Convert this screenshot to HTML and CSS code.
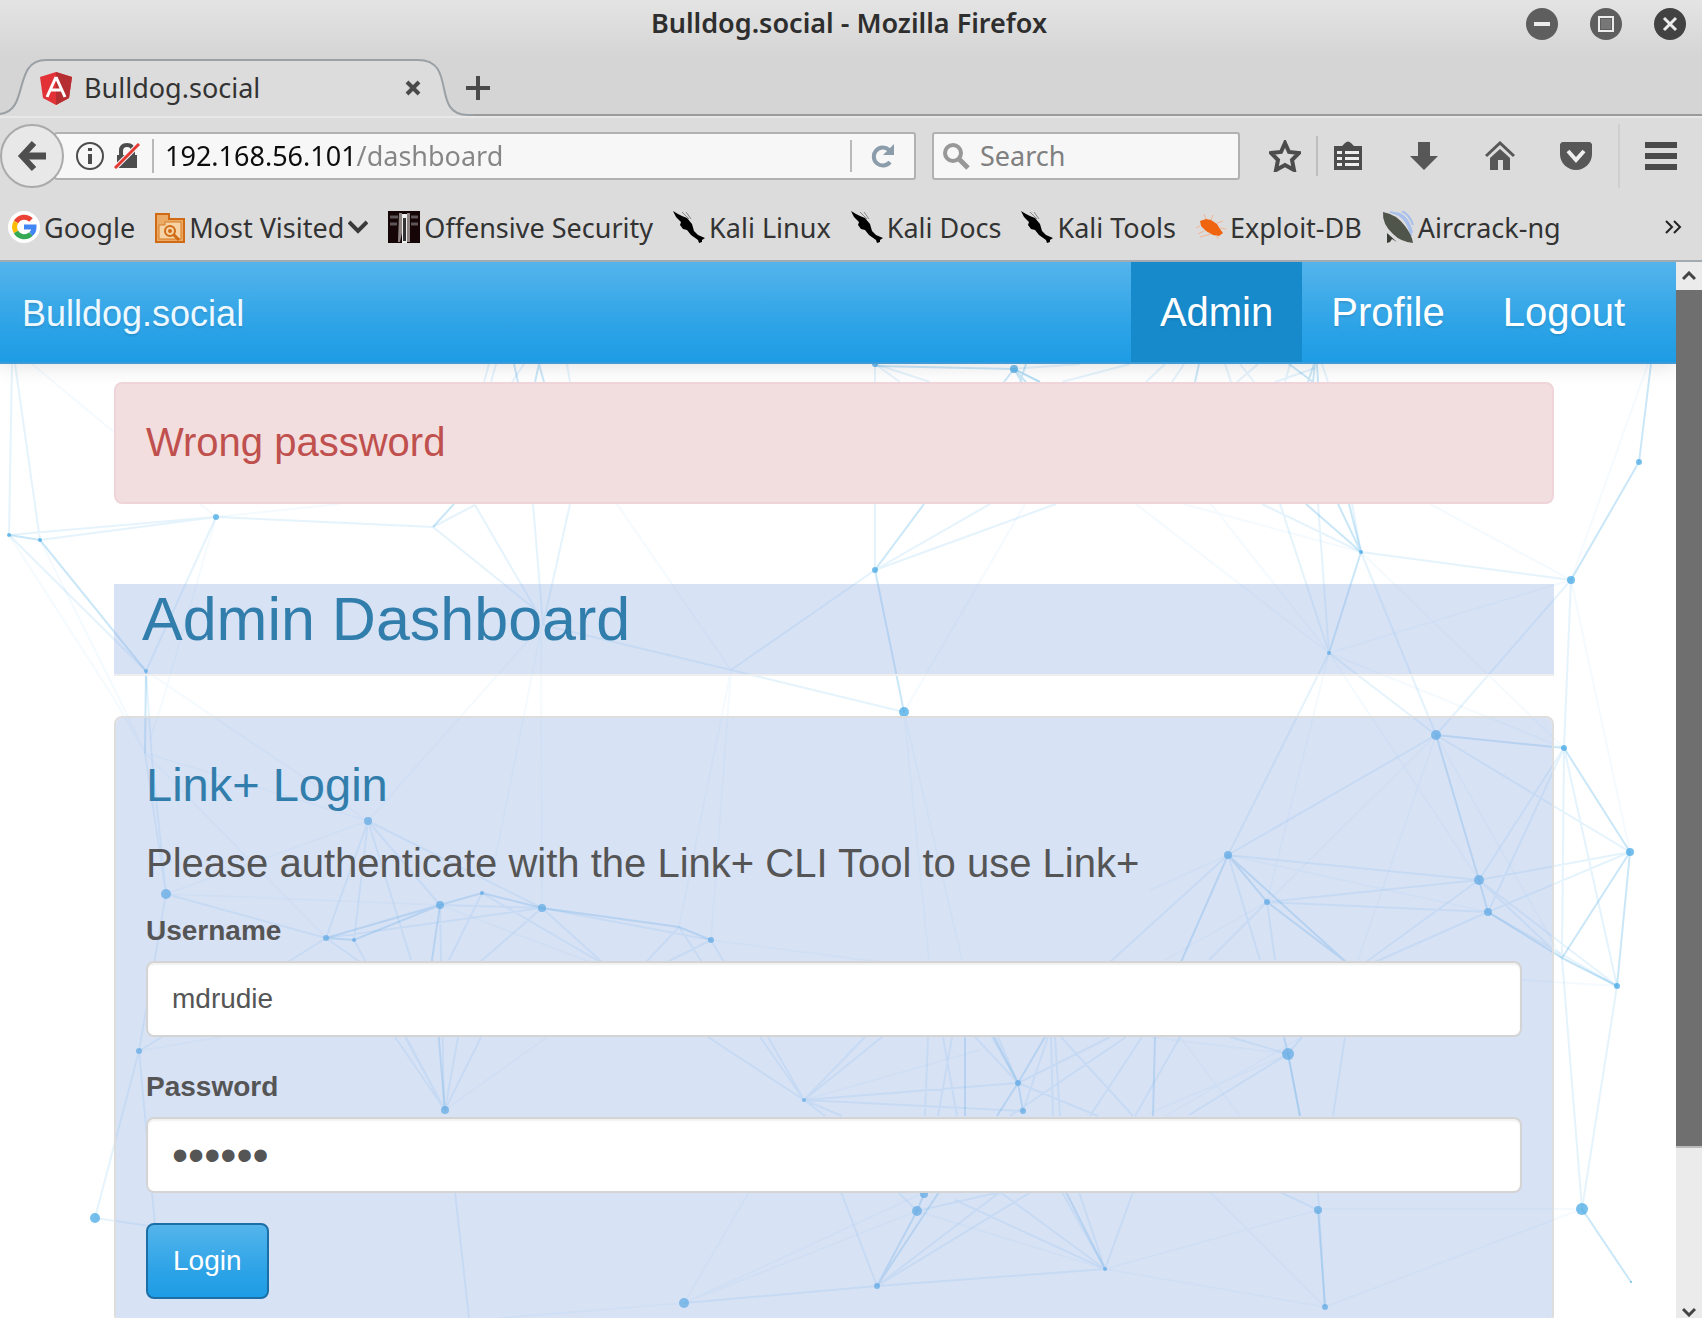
FILE: index.html
```html
<!DOCTYPE html>
<html lang="en">
<head>
<meta charset="utf-8">
<title>Bulldog.social - Mozilla Firefox</title>
<link rel="stylesheet" href="styles.css">
</head>
<body>
<svg class="defs" aria-hidden="true">
  <symbol id="dragon" viewBox="0 0 32 32">
    <path d="M0 0l5 3 4 2 5 2 5 6 2 7 4 4 7 3-3 2 0 2-3 1-1-3-7-5-4-5-4-1-3-4 1-3-5-5z"/>
    <path d="M9 1l7 7M13 1l5 7" stroke="#888" fill="none"/>
  </symbol>
</svg>
<div class="window">
  <header class="chrome-top">
    <div class="titlebar">
      <span class="title">Bulldog.social - Mozilla Firefox</span>
      <div class="controls">
        <button aria-label="Minimize"><svg width="32" height="32"><circle cx="16" cy="16" r="16" fill="#5e5e5e"/><path d="M8 16h16" stroke="#ececec" stroke-width="4"/></svg></button>
        <button aria-label="Maximize"><svg width="32" height="32"><circle cx="16" cy="16" r="16" fill="#5e5e5e"/><path d="M9 9h14v14H9z" fill="none" stroke="#ececec" stroke-width="2"/><path d="M11 11h10v10H11z" fill="#777"/></svg></button>
        <button aria-label="Close window"><svg width="32" height="32"><circle cx="16" cy="16" r="16" fill="#424242"/><path d="M10 10l12 12M22 10L10 22" stroke="#ececec" stroke-width="3"/></svg></button>
      </div>
    </div>
    <div class="tabstrip">
      <div class="tab">
        <svg class="tab-shape" width="474" height="60" viewBox="0 0 474 60">
          <path d="M0 60V58C30 56 12 4 46 4H418C458 4 430 59 468 59H474V60z" fill="#dcdcdc"/>
          <path d="M0 58C30 55 12 4 46 4H418C458 4 430 59 468 59H474" fill="none" stroke="#9aa1a6" stroke-width="2"/>
        </svg>
        <svg class="tab-icon" width="32" height="33" viewBox="0 0 32 33"><path d="M16 0l16 5-3 21-13 7L3 26 0 5z" fill="#e23237"/><path d="M16 0l16 5-3 21-13 7z" fill="#b52e31"/><path d="M16 5L7 25M16 5l9 20M11 18h10" stroke="#fff" stroke-width="3" fill="none"/></svg>
        <span class="tab-label">Bulldog.social</span>
        <button aria-label="Close tab"><svg width="18" height="18"><path d="M3 3l12 12M15 3L3 15" stroke="#4a4a4a" stroke-width="4"/></svg></button>
      </div>
      <button class="new-tab" aria-label="New tab"><svg width="24" height="24"><path d="M12 0v24M0 12h24" stroke="#4a4a4a" stroke-width="4"/></svg></button>
    </div>
  </header>
  <div class="toolbar">
    <button class="back" aria-label="Back"><svg width="30" height="32" viewBox="0 0 30 32"><path d="M17 3L5 16l12 13" fill="none" stroke="#4e4e4e" stroke-width="6"/><path d="M5 16h24" stroke="#4e4e4e" stroke-width="7"/></svg></button>
    <div class="urlbar">
      <svg width="28" height="28" viewBox="0 0 28 28"><circle cx="14" cy="14" r="13" fill="none" stroke="#4c4c4c" stroke-width="2"/><path d="M12 6h4v3h-4zM12 12h4v10h-4z" fill="#4c4c4c"/></svg>
      <svg class="lock" width="26" height="26" viewBox="0 0 26 26"><path d="M3 12h20v13H3z" fill="#4c4c4c"/><path d="M7 13V8q0-6 6-6t6 6v5" fill="none" stroke="#4c4c4c" stroke-width="4"/><path d="M1 25L25 1" stroke="#f7f7f7" stroke-width="5"/><path d="M1 25L25 1" stroke="#e43a32" stroke-width="3"/></svg>
      <input class="url" type="text" value="192.168.56.101/dashboard" aria-label="Address">
      <button class="reload" aria-label="Reload"><svg width="24" height="24" viewBox="0 0 24 24"><path d="M19 18A9 9 0 1 1 18 6" fill="none" stroke="#8b9cab" stroke-width="4"/><path d="M23 0v11H12z" fill="#8b9cab"/></svg></button>
    </div>
    <label class="searchbar">
      <svg width="28" height="28" viewBox="0 0 28 28"><circle cx="11" cy="11" r="8" fill="none" stroke="#989898" stroke-width="4"/><path d="M17 17l9 9" stroke="#989898" stroke-width="5"/></svg>
      <input type="search" placeholder="Search" aria-label="Search">
    </label>
    <div class="tools">
      <button class="star" aria-label="Bookmark this page"><svg width="32" height="32" viewBox="0 0 32 32"><path d="M16 3l4 9 10 1-7 7 2 10-9-5-9 5 2-10-7-7 10-1z" fill="none" stroke="#4c4c4c" stroke-width="4"/></svg></button>
      <button class="clip" aria-label="Show bookmarks"><svg width="30" height="32" viewBox="0 0 30 32"><path d="M1 6h8l3-3q3-3 6 0l3 3h8v24H1z" fill="#4c4c4c"/><path d="M4 11h5v3H4zM12 11h14v3H12zM4 17h5v3H4zM12 17h14v3H12zM4 23h5v3H4zM12 23h14v3H12z" fill="#eee"/></svg></button>
      <button aria-label="Downloads"><svg width="28" height="30" viewBox="0 0 28 30"><path d="M8 1h12v14h8L14 29 0 15h8z" fill="#575757"/></svg></button>
      <button aria-label="Home"><svg width="30" height="30" viewBox="0 0 30 30"><path d="M1 15L15 2l14 13" fill="none" stroke="#575757" stroke-width="3"/><path d="M5 17L15 8l10 9v12h-7V19h-5v10H5z" fill="#575757"/></svg></button>
      <button aria-label="Pocket"><svg width="32" height="30" viewBox="0 0 32 30"><path d="M2 1h28l2 2v10a16 16 0 0 1-32 0V3z" fill="#575757"/><path d="M8 10l8 9 8-9" fill="none" stroke="#eee" stroke-width="4"/></svg></button>
      <button class="menu" aria-label="Menu"><svg width="32" height="28"><path d="M0 3h32M0 14h32M0 25h32" stroke="#4a4a4a" stroke-width="6"/></svg></button>
    </div>
  </div>
  <nav class="bookmarks" aria-label="Bookmarks">
    <a href="#"><svg width="32" height="32" viewBox="0 0 32 32"><circle cx="16" cy="16" r="16" fill="#fff"/><g fill="none" stroke-width="5"><path d="M8 11a9.500 9.500 0 0 1 15-2" stroke="#ea4335"/><path d="M8 21a10 10 0 0 1 0-10" stroke="#fbbc05"/><path d="M23 23a9.500 9.500 0 0 1-15-2" stroke="#34a853"/><path d="M16 16h10q0 5-3 7" stroke="#4285f4"/></g></svg>Google</a>
    <a href="#"><svg width="30" height="32" viewBox="0 0 30 32"><path d="M1 3h13v5h15v23H1z" fill="#e9ab66" stroke="#d06a14" stroke-width="2"/><path d="M4 14h6v-3h16v17H4z" fill="#f5d3a4" stroke="#d97a22"/><circle cx="15" cy="20" r="5" fill="none" stroke="#d06a14" stroke-width="2"/><circle cx="15" cy="20" r="2" fill="#d06a14"/><path d="M18 23l6 6" stroke="#d06a14" stroke-width="3"/></svg>Most Visited<svg class="caret" width="20" height="14"><path d="M1 2l9 9 9-9" fill="none" stroke="#3a3a3a" stroke-width="4"/></svg></a>
    <a href="#"><svg width="32" height="32" viewBox="0 0 32 32"><path d="M0 0h32v32H0z" fill="#160506"/><path d="M2 6h8M2 13h7M23 6h7M23 13h7" stroke="#5d5558" stroke-width="3"/><path d="M11 2h3v20l-2 9h-2zM19 2h3v29h-3z" fill="#8f8583"/><path d="M14 3h5v29h-5z" fill="#eee"/><path d="M15 7h3v23h-3z" fill="#333"/></svg>Offensive Security</a>
    <a href="#"><svg width="32" height="32"><use href="#dragon"/></svg>Kali Linux</a>
    <a href="#"><svg width="32" height="32"><use href="#dragon"/></svg>Kali Docs</a>
    <a href="#"><svg width="32" height="32"><use href="#dragon"/></svg>Kali Tools</a>
    <a href="#"><svg width="30" height="32" viewBox="0 0 30 32"><path d="M4 10l6-2 5 1 6 4 3 5 3 4-4 3-6-1-7-4-5-5z" fill="#f0640f"/><path d="M10 8L8 3M15 9l2-5M21 12l6-2M4 15l-4 2M8 20l-6 3M15 23l-11 3M20 24l2 4M24 17l6 1" stroke="#f2b593" stroke-width="1"/></svg>Exploit-DB</a>
    <a href="#"><svg width="32" height="32" viewBox="0 0 32 32"><path d="M14 2q12 2 16 20M20 0q8 4 11 14M8 1q18 3 21 24" stroke="#a9c0ec" stroke-width="2" fill="none"/><path d="M5 22v10l3-1 2-3 5 3z" fill="#3a3d36"/><path d="M1 1q13 2 22 14 7 9 8 17-12-1-20-9Q0 13 1 1z" fill="#50554c"/></svg>Aircrack-ng</a>
    <button class="more" aria-label="More bookmarks"><svg width="18" height="14"><path d="M2 1l6 6-6 6M10 1l6 6-6 6" fill="none" stroke="#222" stroke-width="2"/></svg></button>
  </nav>

  <div class="viewport">
    <div class="page">
      <svg class="particles" viewBox="0 262 1676 1056" preserveAspectRatio="xMinYMin slice" aria-hidden="true">
        <g fill="none" stroke="#2a9fe4" stroke-width="2">
          <path opacity=".05" d="M32 364L216 517M216 517L340 504M9 535L115 700 145 753M40 540L120 700 145 753M216 517L163 700 150 740M146 671L368 821M542 625L368 821M542 625L495 860M541 625L542 908M145 753L368 821M145 753L326 938M166 894L368 821M166 894L440 905M617 504L731 670M731 670L679 927M731 670L711 940M904 712L1025 504M904 712L929 960M904 712L962 960M1361 552L1183 504M1361 552L1564 748M1329 653L1136 504M1329 653L1211 504M1329 653L1571 580M1329 653L1267 902M1329 653L1479 880M1571 580L1630 852M1329 653L1564 748M1436 735L1267 902M1436 735L1358 960M1436 735L1562 958M1228 855L1488 912M1228 855L1150 890M1562 958L1617 986 1522 980M1582 1209H1318M1582 1209L1325 1307M684 1303L749 1192M684 1303L925 1192M684 1303L917 1211M684 1303L500 1318M917 1211L1105 1269M1105 1269L1318 1210M1105 1269L1325 1307M1288 1054L1150 1037M1288 1054L1150 1113M1180 1037L1240 1116M804 1100L980 1050M1210 1192L1325 1307M445 1110L547 1037M139 1051L220 1037M1648 364L1571 580M711 940L880 962M440 905L590 962M1571 580L1430 504M1165 1116L1302 1037M1267 902L1165 960"/>
          <path opacity=".12" d="M12 364L9 535 216 517M15 364L40 540M40 540L216 517 433 527 475 505M9 535L146 671 216 517M475 505L536 610M433 527L536 610M533 504L543 625 570 504M543 625L731 670 904 712M731 670L875 570 990 504M875 364V570M875 570L1056 504M146 671L152 760 166 894M145 753L166 894 139 1051 95 1218M166 894L326 938M368 821L326 938M368 821L354 940M368 821L440 905M368 821L542 908M368 821L411 960M440 905L542 908 711 940M326 938L542 908M482 893L449 960M482 893L600 962M542 908L480 962M542 908L602 962M354 940L445 1110M326 938L360 962M326 938L288 962M679 927L646 962M711 940L667 962M679 927L702 962M711 940L724 962M440 905L444 1110M395 1037L445 1110 405 1037M445 1110L458 1037M445 1110L481 1037M139 1051L155 1225M95 1218L150 1226M455 1192L469 1318M139 1051L162 1037M1361 552L1571 580 1436 735 1361 552M1361 552L1262 504M1361 552L1352 504M1329 653L1318 504M1329 653L1280 504M1329 653L1228 855M1329 653L1436 735M1571 580L1564 748 1562 958 1582 1209 1617 986M1436 735L1228 855 1479 880 1630 852 1488 912 1267 902 1479 880M1436 735L1630 852M1564 748L1617 986M1564 748L1479 880 1562 958M1564 748L1488 912M1228 855L1260 960M1228 855L1110 962M1267 902L1209 960M1267 902L1275 960M1479 880L1366 962M1488 912L1375 962M1479 880L1617 986 1488 912M708 1037L804 1100 760 1037M768 1037L804 1100 865 1037M882 1037L804 1100 1018 1083M804 1100L1023 1111M804 1100L842 1116M804 1100L825 1116M928 1037L925 1116M952 1037L938 1116M943 1037L957 1116M1051 1037L1053 1116M1055 1037L1060 1116M1061 1037L1133 1116M1142 1037L1090 1116M1126 1037L1010 1116M1018 1083L1098 1116M1018 1083L992 1037M1018 1083L998 1037M1018 1083L975 1037M1023 1111L1048 1037M1018 1083L1110 1037M1180 1037L1135 1116M1288 1054L1230 1037M1288 1054L1302 1037M1288 1054L1189 1115M1288 1054L1300 1116M1345 1037L1333 1116M1318 1210L1280 1192M1318 1192L1325 1307M917 1211L1000 1192M917 1211L898 1192M877 1286L841 1192M877 1286L1000 1192M877 1286L1031 1192M684 1303L877 1286 1105 1269 955 1200M1105 1269L1000 1192M1105 1269L1062 1192M1105 1269L1079 1192M1105 1269L1133 1192M875 364L930 382M875 364L900 382M1014 369L1040 382M1014 369L1080 364M1062 382L1130 364M1146 382L1165 364M1172 382L1184 364M1225 364L1231 382M1240 364L1254 382M1258 364L1237 382M1275 382L1315 368M1285 382L1290 364M1322 364L1328 382M484 382L489 364M491 382L496 364M512 382L524 364M567 364L570 382"/>
          <path opacity=".25" d="M9 535L40 540 146 671 145 753M454 504L433 527M326 938L354 940 440 905 482 893 542 908 679 927 711 940M326 938L440 905 432 960 445 1110M1651 364L1639 462 1571 580M1361 552L1329 653M1361 552L1338 504M1361 552L1306 504M1361 552L1349 504M875 570L904 712M875 570L924 504M1436 735L1479 880 1488 912 1562 958 1617 986 1630 852 1564 748 1436 735M1630 852L1562 958M1228 855L1267 902 1346 962 1228 855 1181 962M1018 1083L997 1116M1018 1083L1023 1111M1045 1037L1018 1083 994 1037M965 1037V1116M1155 1037L1153 1116M1288 1054L1284 1037M1288 1054L1300 1116M1318 1210L1325 1307M1582 1209L1631 1282M924 1194L917 1211 877 1286 939 1192M1105 1269L1066 1192M514 364L518 382M535 382L539 364 544 382M875 366L1014 369 1022 382M1014 369L1004 382M1014 369L1026 382M1014 369L1040 382M1026 364L1020 382M1195 382L1199 364M1289 364L1313 382 1315 364M1308 382L1314 364M1317 364L1318 382"/>
        </g>
        <g fill="#3ea5e4" opacity=".7">
          <circle cx="9" cy="535" r="2"/><circle cx="40" cy="540" r="2"/><circle cx="216" cy="517" r="3"/><circle cx="146" cy="671" r="2"/><circle cx="166" cy="894" r="5"/><circle cx="368" cy="821" r="4"/><circle cx="326" cy="938" r="3"/><circle cx="354" cy="940" r="2"/><circle cx="440" cy="905" r="4"/><circle cx="482" cy="893" r="2"/><circle cx="542" cy="908" r="4"/><circle cx="139" cy="1051" r="3"/><circle cx="95" cy="1218" r="5"/><circle cx="445" cy="1110" r="4"/><circle cx="711" cy="940" r="3"/><circle cx="875" cy="364" r="3"/><circle cx="1014" cy="369" r="4"/><circle cx="875" cy="570" r="3"/><circle cx="904" cy="712" r="5"/><circle cx="1361" cy="552" r="2"/><circle cx="1329" cy="653" r="2"/><circle cx="1639" cy="462" r="3"/><circle cx="1571" cy="580" r="4"/><circle cx="1436" cy="735" r="5"/><circle cx="1564" cy="748" r="3"/><circle cx="1630" cy="852" r="4"/><circle cx="1228" cy="855" r="4"/><circle cx="1267" cy="902" r="3"/><circle cx="1479" cy="880" r="5"/><circle cx="1488" cy="912" r="4"/><circle cx="1617" cy="986" r="3"/><circle cx="1288" cy="1054" r="6"/><circle cx="1318" cy="1210" r="4"/><circle cx="1325" cy="1307" r="3"/><circle cx="1582" cy="1209" r="6"/><circle cx="1631" cy="1282" r="1"/><circle cx="804" cy="1100" r="2"/><circle cx="1018" cy="1083" r="3"/><circle cx="1023" cy="1111" r="3"/><circle cx="917" cy="1211" r="5"/><circle cx="924" cy="1194" r="4"/><circle cx="877" cy="1286" r="3"/><circle cx="1105" cy="1269" r="2"/><circle cx="684" cy="1303" r="5"/>
        </g>
      </svg>
      <nav class="navbar" aria-label="Main">
        <a class="brand" href="#">Bulldog.social</a>
        <div class="links"><a class="active" href="#">Admin</a><a href="#">Profile</a><a href="#">Logout</a></div>
      </nav>
      <main class="container">
        <div class="alert" role="alert">Wrong password</div>
        <h1>Admin Dashboard</h1>
        <form class="well">
          <h2>Link+ Login</h2>
          <p>Please authenticate with the Link+ CLI Tool to use Link+</p>
          <div class="field"><label for="username">Username</label><input id="username" type="text" value="mdrudie"></div>
          <div class="field"><label for="password">Password</label><input id="password" type="password" value="secret"></div>
          <button class="login" type="button">Login</button>
        </form>
      </main>
    </div>
    <div class="scrollbar">
      <div class="arrow"><svg width="14" height="10"><path d="M1 8l6-6 6 6" fill="none" stroke="#444" stroke-width="3"/></svg></div>
      <div class="thumb"></div>
      <div class="track"></div>
      <div class="arrow down"><svg width="14" height="10"><path d="M1 2l6 6 6-6" fill="none" stroke="#444" stroke-width="3"/></svg></div>
    </div>
  </div>
</div>
</body>
</html>
```
FILE: styles.css
```css
* { box-sizing: border-box; }
body { margin: 0; font-family: "Liberation Sans", Arial, sans-serif; color: #555; }
button { margin: 0; padding: 0; border: 0; background: none; font: inherit; color: inherit; display: flex; align-items: center; justify-content: center; }
input { font: inherit; color: inherit; min-width: 0; }
a { color: inherit; text-decoration: none; }
svg { flex: none; display: block; }
.defs { position: absolute; width: 0; height: 0; }

.window { height: 100vh; display: flex; flex-direction: column; overflow: hidden; background: #dcdcdc; }
.chrome-top, .toolbar, .bookmarks { font-family: "Noto Sans", "Open Sans", sans-serif; color: #333; font-size: 27px; flex: none; }

/* Title bar and tabs */
.chrome-top { background: linear-gradient(#e4e4e4, #d5d5d5 56px); }
.titlebar { height: 56px; display: grid; grid-template-columns: 1fr auto 1fr; padding-right: 4px; padding-bottom: 8px; align-items: center; }
.title { grid-column: 2; font-weight: 600; font-size: 27px; line-height: 36px; padding-bottom: 2px; color: #2e2e2e; }
.controls { display: flex; gap: 32px; justify-content: flex-end; padding-right: 12px; }
.tabstrip { height: 60px; display: flex; align-items: center; box-shadow: inset 0 -2px #9b9b9b; }
.tab { position: relative; width: 464px; height: 60px; display: flex; align-items: center; gap: 12px; padding: 4px 42px 0 40px; }
.tab-shape { position: absolute; left: 0; top: 0; }
.tab-icon, .tab-label, .tab button { position: relative; }
.tab-label { flex: 1; padding-bottom: 2px; }
.new-tab { padding: 4px 0 0 2px; }

/* Navigation toolbar */
.toolbar { height: 80px; display: flex; align-items: center; box-shadow: inset 0 2px #e8e8e8; }
.back { position: relative; z-index: 1; width: 64px; height: 64px; border-radius: 50%; border: 2px solid #aaa; background: #e8e8e8; flex: none; }
.urlbar, .searchbar { height: 48px; display: flex; align-items: center; background: #f7f7f7; border: 2px solid #b1b1b1; border-radius: 3px; }
.urlbar { flex: 1; margin-left: -10px; padding-left: 20px; }
.lock { margin-left: 10px; }
.url, .searchbar input { border: 0; outline: 0; padding: 0 0 2px; flex: 1; background: none; }
.url { margin-left: 12px; padding-left: 11px; height: 34px; border-left: 2px solid #b9b9b9; background: linear-gradient(90deg, #0c0c0c 203px, #858585 203px) text; color: transparent; }
.reload { width: 64px; height: 32px; border-left: 2px solid #b9b9b9; }
.searchbar { width: 308px; margin-left: 16px; padding: 0 8px; gap: 10px; flex: none; }
.searchbar input::placeholder { color: #808080; opacity: 1; }
.tools { display: flex; align-items: center; margin-left: 14px; flex: none; }
.tools button { width: 76px; height: 40px; }
.tools .star { width: 62px; }
.tools .clip { width: 70px; padding-right: 8px; border-left: 2px solid #bdbdbd; }
.tools .menu { width: 84px; height: 64px; margin-left: 4px; border-left: 2px solid #cfcfcf; }

/* Bookmarks */
.bookmarks { height: 66px; padding: 0 20px 2px 8px; display: flex; align-items: center; gap: 20px; border-bottom: 2px solid #a3abb1; }
.bookmarks a { display: flex; align-items: center; gap: 4px; white-space: nowrap; }
.more { margin-left: auto; }

/* Page area */
.viewport { flex: 1; min-height: 0; display: flex; background: #fff; }
.page { position: relative; flex: 1; min-width: 0; overflow: hidden; }
.particles { position: absolute; left: 0; top: 0; width: 100%; height: 100%; }
.navbar { position: relative; display: flex; justify-content: space-between; align-items: stretch; height: 102px; padding: 0 22px; background: linear-gradient(#54b4eb, #2fa4e7 60%, #1d9ce5); border-bottom: 2px solid #3f9bd5; box-shadow: 0 2px 20px rgba(0,0,0,.12); color: #fff; font-size: 40px; text-shadow: 0 2px 2px rgba(0,0,0,.1); }
.brand { display: flex; align-items: center; font-size: 36px; padding-top: 4px; color: #eef8ff; }
.links { display: flex; }
.links a { display: flex; align-items: center; padding: 0 29px; }
.links .active { background: #178acc; }
.container { position: relative; margin: 18px 122px 0 114px; }
.alert { padding: 35px 30px 37px; line-height: 46px; font-size: 40px; color: #c0504d; background: #f2dede; border: 2px solid #efd5d9; border-radius: 8px; }
h1, h2, p { margin: 0; font-weight: normal; }
h1, .well { background: rgba(148,175,227,.36); }
h1 { margin-top: 80px; padding: 0 28px 20px; font-size: 61px; line-height: 70px; color: #317eac; border-bottom: 2px solid #eee; background-clip: padding-box; }
.well { margin-top: 40px; padding: 37px 30px 22px; border: 2px solid #ddd; border-radius: 8px; background-clip: padding-box; }
h2 { font-size: 47px; line-height: 60px; color: #317eac; }
p { margin: 20px 0; font-size: 40px; line-height: 56px; }
.field { display: flex; flex-direction: column; gap: 10px; font-size: 28px; margin-bottom: 30px; }
.field label { font-weight: bold; line-height: 40px; }
.field input { height: 76px; padding: 0 24px; background: #fff; border: 2px solid #d4d4d4; border-radius: 8px; box-shadow: inset 0 2px 2px rgba(0,0,0,.06); outline: 0; }
.field input[type="password"] { font-size: 46px; }
.login { height: 76px; padding: 0 25px; font-size: 28px; color: #fff; background: linear-gradient(#54b4eb, #2fa4e7 60%, #1d9ce5); border: 2px solid #1b6fa6; border-radius: 8px; }

/* Scrollbar */
.scrollbar { width: 26px; display: flex; flex-direction: column; background: #ebebeb; flex: none; }
.arrow { height: 28px; display: flex; align-items: center; justify-content: center; flex: none; }
.arrow.down { height: 12px; }
.thumb { flex: 27; background: #6f6f6f; border-bottom: 2px solid #bbb; }
.track { flex: 5; }
```
